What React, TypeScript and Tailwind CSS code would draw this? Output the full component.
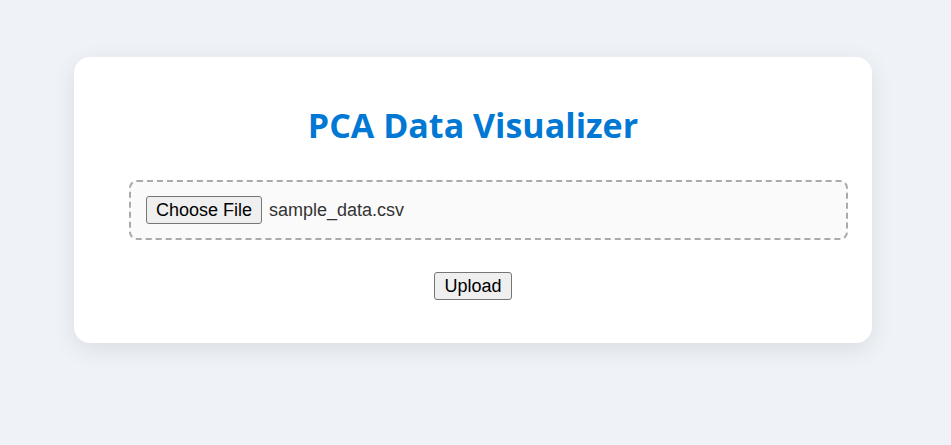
import React from "react";

export default function App() {
  return (
    <div className="min-h-[445px] w-full bg-[#eff2f7] pt-[57px]">
      <div className="flex w-[946px] justify-center">
        {/* Upload Card */}
        <div className="w-[798px] rounded-[16px] bg-white px-[24px] pt-[46px] pb-[43px] shadow-[0_6px_24px_rgba(0,0,0,0.09)]">
          <h1 className="text-center font-['Open_Sans',sans-serif] text-[34px] leading-[44px] font-bold text-[#0078d4]">
            PCA Data Visualizer
          </h1>

          <div className="mt-[33px] ml-[31px] flex h-[60px] items-center rounded-[8px] border-2 border-dashed border-[#aaaaaa] bg-[#fafafa] px-[15px] font-['Liberation_Sans',Arial,sans-serif]">
            <button className="h-[28px] rounded-[3px] border border-[#767676] bg-[#efefef] px-[9px] text-[18px] leading-none text-black">
              Choose File
            </button>
            <span className="ml-[7px] text-[18px] text-[#333333]">sample_data.csv</span>
          </div>

          <div className="mt-[32px] flex justify-center font-['Liberation_Sans',Arial,sans-serif]">
            <button className="h-[28px] rounded-[3px] border border-[#767676] bg-[#efefef] px-[9px] text-[18px] leading-none text-black">
              Upload
            </button>
          </div>
        </div>
      </div>
    </div>
  );
}
